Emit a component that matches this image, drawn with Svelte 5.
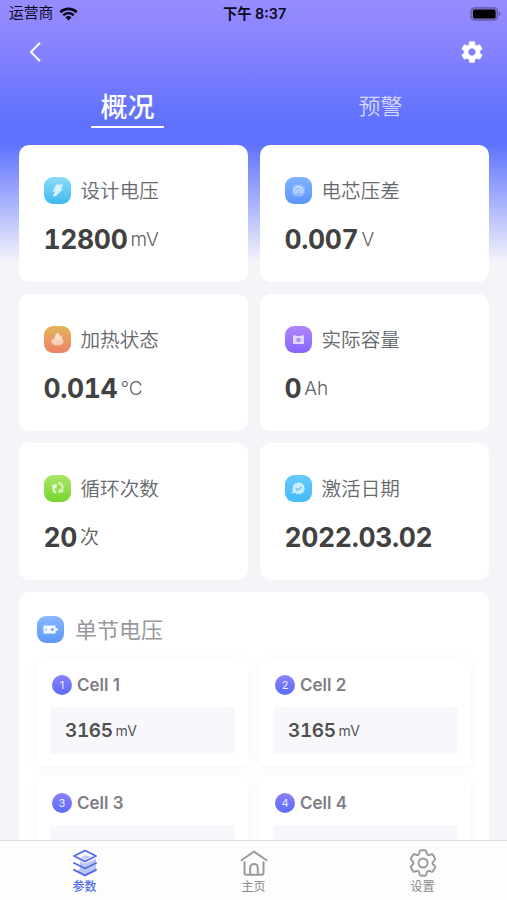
<script>
  const metrics = [
    { icon: 'bolt', label: '设计电压', value: '12800', unit: 'mV', from: '#8bdcf8', to: '#40b9ef' },
    { icon: 'core', label: '电芯压差', value: '0.007', unit: 'V', from: '#82b3ff', to: '#5c94fb' },
    { icon: 'flame', label: '加热状态', value: '0.014', unit: '°C', from: '#e2b45a', to: '#ee8369' },
    { icon: 'capacity', label: '实际容量', value: '0', unit: 'Ah', from: '#ae86fb', to: '#8466fc' },
    { icon: 'cycle', label: '循环次数', value: '20', unit: '次', from: '#aae668', to: '#78d52f' },
    { icon: 'badge', label: '激活日期', value: '2022.03.02', unit: '', from: '#66c9fb', to: '#45bbfb' }
  ];
  const cells = [
    { n: 1, mv: 3165 },
    { n: 2, mv: 3165 },
    { n: 3, mv: null },
    { n: 4, mv: null }
  ];
</script>

{#snippet tile(icon, from, to)}
  <svg class="tile" viewBox="0 0 27 27">
    <defs>
      <linearGradient id={'g-' + icon} x1="0" y1="0" x2="0" y2="1">
        <stop offset="0" stop-color={from} />
        <stop offset="1" stop-color={to} />
      </linearGradient>
    </defs>
    <rect width="27" height="27" rx="9" fill="url(#g-{icon})" />
    {#if icon === 'bolt'}
      <path d="M12.2 7.600h7.200l-2.600 4.300h2.100l-7.200 7.300h-3l2.600-4.700H8.600z" fill="#fff" fill-opacity=".72" />
      <path d="M8.600 14.500h2.700l-2.600 4.700 3-.1 4-4.100z" fill="#fff" fill-opacity=".3" />
    {:else if icon === 'core'}
      <path d="M10.300 7.800h6.400l3.100 3v5.600l-3.100 3h-6.400l-3.100-3v-5.600z" fill="#fff" fill-opacity=".28" />
      <path d="M10.300 16.200a4 4 0 1 1 6.400 0" fill="none" stroke="#fff" stroke-opacity=".6" stroke-width="1.100" />
      <path d="M12 16.400a2 2 0 1 1 3 0" fill="none" stroke="#fff" stroke-opacity=".65" />
    {:else if icon === 'flame'}
      <path d="M13.600 6.800c1.700 1 2.300 2.600 2 4.600.7-1 .8-1.800.8-2.600 1.400 1.400 1.600 2.700 1.500 3.700 1 .4 1.700 1.300 1.700 2.500 0 2.700-2.600 4.400-6.100 4.400s-6.100-1.700-6.100-4.200c0-1.700 1.400-2.900 3.400-3 0-2.300 1-4.100 2.800-5.400z" fill="#fff" fill-opacity=".55" />
      <path d="M13.600 6.800c1.700 1 2.300 2.600 2 4.600.7-1 .8-1.800.8-2.600 1.400 1.400 1.600 2.700 1.500 3.700l-3.400 2-3.700-2.300c0-2.300 1-4.100 2.800-5.400z" fill="#fff" fill-opacity=".4" />
    {:else if icon === 'capacity'}
      <path d="M8 9.200h2.500l.8.8h4.400l.8-.8H19v8.800H8z" fill="#fff" fill-opacity=".7" />
      <circle cx="13.500" cy="14" r="2.100" fill="#9a74f5" />
      <circle cx="13.500" cy="14" r=".8" fill="#fff" fill-opacity=".7" />
    {:else if icon === 'cycle'}
      <path d="M12.300 17.800C9.200 16.600 8.600 13.200 10.500 11.200" fill="none" stroke="#fff" stroke-opacity=".8" stroke-width="2.200" />
      <path d="M7 10.600l5.700-1.900-.3 5.100z" fill="#fff" fill-opacity=".8" />
      <path d="M14.200 7.800c4.200.7 5.600 5 3 8.600" fill="none" stroke="#fff" stroke-opacity=".55" stroke-width="2.600" />
      <path d="M20 16.800l-5.600 1.500.2-5.100z" fill="#fff" fill-opacity=".55" />
    {:else if icon === 'badge'}
      <path d="M13.500 7l1.600 1 1.900-.1.800 1.700 1.600 1-.1 1.900.8 1.600-1.200 1.400-.3 1.900-1.800.6-1.300 1.300-1.900-.5-1.900.5-1.300-1.300-4 .2 1.500-2.300-.7-1.700.8-1.700-.1-1.900 1.600-1 .8-1.700 1.900.1z" fill="#fff" fill-opacity=".68" />
      <path d="M10.900 13.200l2 2 3.600-3.500" fill="none" stroke="#4bb8ee" stroke-opacity=".8" stroke-width="1.400" />
    {:else}
      <path d="M6.500 9.600h12v2.300h1.200v.8h1.300v1.600h-1.300v.8h-1.200v2.500h-12z" fill="#fff" fill-opacity=".94" />
      <path d="M8.700 12.200h.9v2.700h-.9zM14.600 12.300h2.200v2.500h-2.200l-1-1.250z" fill="#6ca0fb" />
    {/if}
  </svg>
{/snippet}

<div class="screen">
  <header>
    <div class="status">
      <div class="carrier">
        <span>运营商</span>
        <svg width="19" height="14" viewBox="0 0 19 14" fill="none" stroke="#080716">
          <path d="M1.300 5.200a11.700 11.700 0 0 1 16.400 0" stroke-width="2.800" />
          <path d="M4.300 8.300a7.400 7.400 0 0 1 10.400 0" stroke-width="2.400" />
          <path d="M9.500 13.500l-3-3a4.300 4.300 0 0 1 6 0z" fill="#080716" stroke="none" />
        </svg>
      </div>
      <div class="time">下午 8:37</div>
      <div class="power">
        <svg width="31" height="14" viewBox="0 0 31 14">
          <rect x="1" y=".8" width="26.500" height="12.400" rx="3.600" fill="#7f78cc" stroke="#6059a9" stroke-width="1.200" />
          <rect x="3" y="2.400" width="22.600" height="9.200" rx="1.600" fill="#020207" />
          <path d="M28.900 4.800c2 .6 2 3.800 0 4.400z" fill="#6059a9" />
        </svg>
      </div>
    </div>
    <div class="toolbar">
      <svg width="14" height="22" viewBox="0 0 14 22" fill="none" stroke="#fff" stroke-width="2"><path d="M12 1.800L3 11l9 9.200" /></svg>
      <svg width="26" height="26" viewBox="0 0 24 24" fill="#fff" stroke="#fff" stroke-width=".5"><path d="M19.140 12.940c.04-.3.06-.61.06-.94 0-.32-.02-.64-.07-.94l2.030-1.580c.18-.14.23-.41.12-.61l-1.920-3.320c-.12-.22-.37-.29-.59-.22l-2.390.96c-.5-.38-1.030-.7-1.620-.94l-.36-2.540c-.04-.24-.24-.41-.48-.41h-3.840c-.24 0-.43.17-.47.41l-.36 2.540c-.59.24-1.130.57-1.620.94l-2.390-.96c-.22-.08-.47 0-.59.22L2.740 8.870c-.12.21-.08.47.12.61l2.030 1.580c-.05.3-.09.63-.09.94s.02.64.07.94l-2.030 1.580c-.18.14-.23.41-.12.61l1.920 3.320c.12.22.37.29.59.22l2.390-.96c.5.38 1.030.7 1.620.94l.36 2.540c.05.24.24.41.48.41h3.840c.24 0 .44-.17.47-.41l.36-2.540c.59-.24 1.130-.56 1.620-.94l2.390.96c.22.08.47 0 .59-.22l1.920-3.320c.12-.22.07-.47-.12-.61l-2.010-1.580zM12 15.600c-1.980 0-3.600-1.620-3.600-3.600s1.620-3.600 3.600-3.600 3.600 1.620 3.600 3.600-1.620 3.600-3.600 3.600z" /></svg>
    </div>
    <div class="tabs">
      <div class="tab active"><span>概况</span></div>
      <div class="tab"><span>预警</span></div>
    </div>
  </header>

  <main>
    <div class="metrics">
      {#each metrics as m}
        <section class="card">
          <div class="head">{@render tile(m.icon, m.from, m.to)}<span>{m.label}</span></div>
          <div class="reading"><b>{m.value}</b><span>{m.unit}</span></div>
        </section>
      {/each}
    </div>
    <section class="panel">
      <div class="panel-head">{@render tile('battery', '#88b6fe', '#5f97fa')}<span>单节电压</span></div>
      <div class="cells">
        {#each cells as c}
          <div class="cell">
            <div class="name"><i>{c.n}</i><span>Cell {c.n}</span></div>
            <div class="volt">
              {#if c.mv !== null}<b>{c.mv}</b><span>mV</span>{/if}
            </div>
          </div>
        {/each}
      </div>
    </section>
  </main>

  <nav>
    <div class="item on">
      <svg viewBox="0 0 34 34" fill="none" stroke="#536bea" stroke-width="1.900" stroke-linejoin="round" stroke-linecap="round">
        <path d="M12 15l5 2.500 11-5v12.500L17 30l-8-4 3-4z" fill="#bcc7fb" stroke="none" />
        <path d="M17 4.500l11 5.500-11 5.500L6 10z" fill="#fff" />
        <path d="M17 9l7 1.500-7 3.500-4.500-2.300z" fill="#c5cffc" stroke="none" />
        <path d="M6 17l11 5.500L28 17M6 23.800l11 5.500 11-5.500" />
      </svg>
      <span>参数</span>
    </div>
    <div class="item">
      <svg viewBox="0 0 34 34" fill="none" stroke="#999" stroke-width="2" stroke-linejoin="round" stroke-linecap="round">
        <path d="M4.500 14.200L17 5.500l12.500 8.700" />
        <path d="M7.500 16.200v10.500a2 2 0 0 0 2 2h15a2 2 0 0 0 2-2V16.200" />
        <path d="M13.200 28.200v-6.500a3.800 3.800 0 0 1 7.600 0v6.500" />
      </svg>
      <span>主页</span>
    </div>
    <div class="item">
      <svg viewBox="0 0 24 24" fill="none" stroke="#999" stroke-width="1.350" stroke-linejoin="round">
        <path d="M9.594 3.940c.09-.542.56-.94 1.110-.94h2.593c.55 0 1.020.398 1.110.94l.213 1.281c.063.374.313.686.645.87.074.04.147.083.22.127.325.196.72.257 1.075.124l1.217-.456a1.125 1.125 0 0 1 1.370.49l1.296 2.247a1.125 1.125 0 0 1-.26 1.431l-1.003.827c-.293.241-.438.613-.43.992a7.723 7.723 0 0 1 0 .255c-.008.378.137.75.43.991l1.004.827c.424.35.534.955.26 1.430l-1.298 2.247a1.125 1.125 0 0 1-1.369.491l-1.217-.456c-.355-.133-.75-.072-1.076.124a6.470 6.470 0 0 1-.22.128c-.331.183-.581.495-.644.869l-.213 1.281c-.09.543-.56.94-1.110.94h-2.594c-.55 0-1.019-.398-1.110-.94l-.213-1.281c-.062-.374-.312-.686-.644-.87a6.520 6.520 0 0 1-.22-.127c-.325-.196-.72-.257-1.076-.124l-1.217.456a1.125 1.125 0 0 1-1.369-.49l-1.297-2.247a1.125 1.125 0 0 1 .26-1.431l1.004-.827c.292-.24.437-.613.43-.991a6.932 6.932 0 0 1 0-.255c.007-.38-.138-.751-.43-.992l-1.004-.827a1.125 1.125 0 0 1-.26-1.430l1.297-2.247a1.125 1.125 0 0 1 1.370-.491l1.216.456c.356.133.751.072 1.076-.124.072-.044.146-.086.22-.128.332-.183.582-.495.644-.869l.214-1.280Z" />
        <circle cx="12" cy="12" r="3.200" />
      </svg>
      <span>设置</span>
    </div>
  </nav>
</div>

<style>
  .screen {
    box-sizing: border-box;
    width: 100%;
    height: 900px;
    overflow: hidden;
    display: flex;
    flex-direction: column;
    font-family: Inter, "Noto Sans CJK SC", sans-serif;
    background: linear-gradient(180deg, #978cff 0, #8983fe 42px, #5b70fd 130px, #5f73fc 145px, #f4f4f9 262px, #f4f4f9 100%);
  }
  header { flex: none; height: 145px; }
  .status {
    display: flex;
    align-items: center;
    height: 27px;
    padding: 0 6px 0 9px;
    font-size: 14.800px;
    line-height: 27px;
    color: #0b0920;
  }
  .carrier, .power { flex: 1; display: flex; align-items: center; }
  .carrier { gap: 6px; }
  .power { justify-content: flex-end; }
  .time { margin-left: -1px; font-weight: 600; font-size: 14.300px; }
  .toolbar {
    display: flex;
    justify-content: space-between;
    align-items: center;
    height: 50px;
    padding: 0 22px 0 28px;
  }
  .tabs { display: flex; height: 52px; }
  .tab {
    flex: 1;
    display: flex;
    justify-content: center;
    color: rgba(255, 255, 255, .72);
    font-size: 22px;
    font-weight: 350;
    line-height: 58px;
  }
  .tab.active { padding-left: 1px; color: #fff; font-size: 27px; font-weight: 500; line-height: 61px; }
  .tab.active span { width: 73px; text-align: center; height: 49px; border-bottom: 2px solid #fff; border-radius: 1px; }
  main { flex: 1; min-height: 0; overflow: hidden; padding: 0 18px 0 19px; }
  .metrics { display: grid; grid-template-columns: 1fr 1fr; gap: 12px; }
  .card { box-sizing: border-box; height: 137px; padding: 32px 25px 0 24.500px; border-radius: 10px; background: #fff; }
  .head { display: flex; align-items: center; gap: 10px; height: 27px; font-size: 19.600px; font-weight: 350; color: #666870; }
  .head span { margin-top: -2px; }
  .tile { flex: none; width: 27px; height: 27px; }
  .reading { display: flex; gap: 3px; margin-top: 17px; line-height: 36px; color: #606060; font-size: 19px; font-weight: 350; }
  .reading b { font-size: 26.500px; font-weight: 650; font-variant-numeric: tabular-nums; letter-spacing: -.35px; color: #414141; }
  .reading span { line-height: 37px; }
  .panel { margin-top: 12px; padding: 24px 18px 0; border-radius: 10px; background: #fff; }
  .panel-head { display: flex; align-items: center; gap: 11px; height: 27px; font-size: 22px; color: #98989c; }
  .panel-head span { margin-top: -3px; }
  .cells { display: grid; grid-template-columns: 1fr 1fr; gap: 10px 12px; margin-top: 15px; }
  .cell { box-sizing: border-box; height: 108px; padding: 16px 13px 0; border-radius: 6px; background: #fff; box-shadow: 0 2px 12px rgba(0, 0, 0, .045); }
  .name { display: flex; align-items: center; gap: 5px; height: 21px; padding-left: 2px; font-size: 17px; font-weight: 600; color: #7d7d86; }
  .name i {
    width: 20px;
    height: 20px;
    border-radius: 50%;
    background: linear-gradient(#8d80f8, #5a6bfa);
    color: #eeeefe;
    font: 400 11px/20px Inter, sans-serif;
    text-align: center;
  }
  .volt { display: flex; gap: 3px; height: 47px; margin-top: 12px; padding-left: 15px; border-radius: 4px; background: #f8f8fc; line-height: 48px; color: #555; font-size: 14px; }
  .volt b { font-size: 19px; font-weight: 600; font-variant-numeric: tabular-nums; letter-spacing: -.4px; color: #505050; }
  nav { flex: none; box-sizing: border-box; height: 60px; display: flex; border-top: 1px solid #dedee1; background: #fdfdfd; }
  .item { flex: 1; display: flex; flex-direction: column; align-items: center; padding-top: 5px; color: #888; font-size: 12px; line-height: 14px; }
  .item svg { flex: none; width: 34px; height: 34px; }
  .item.on { color: #536bea; font-weight: 500; }
</style>
